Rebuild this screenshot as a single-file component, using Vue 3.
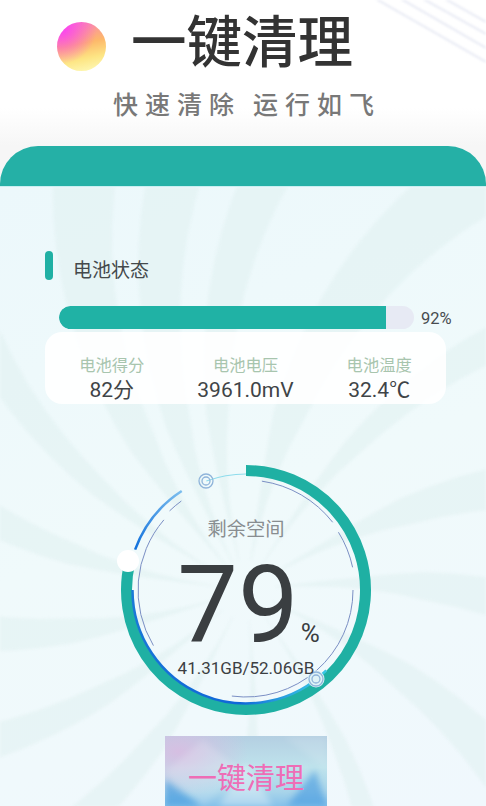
<script setup>
const CX = 125
const CY = 125

function polar(r, deg, cx = CX, cy = CY) {
  const a = (deg * Math.PI) / 180
  return [cx + r * Math.sin(a), cy - r * Math.cos(a)]
}
function arc(r, from, to) {
  const [x1, y1] = polar(r, from)
  const [x2, y2] = polar(r, to)
  const large = to - from > 180 ? 1 : 0
  return `M${x1.toFixed(2)} ${y1.toFixed(2)}A${r} ${r} 0 ${large} 1 ${x2.toFixed(2)} ${y2.toFixed(2)}`
}

const thinArcs = [
  arc(110, 8.3, 52),
  arc(109, 58, 78),
  arc(107, 90, 187.6),
  arc(108, 239, 310.5),
  arc(110, 316, 324)
]

const ring = arc(119.5, 0, 284)
const innerBlue = arc(113.5, 135, 270)
const outerBlue = arc(118, 290, 327)
const cyanArc = arc(116, 340, 360)

// Sunburst blades, angle measured at r = 400 from the ring's centre.
const blades = [
  [336, 4.5], [349, 4], [2, 3.5], [25, 5], [48, 3], [75, 4.5], [100, 4.5], [130, 4.5],
  [160, 2.5], [190, 2.5], [222, 3.5], [245, 3.5], [268, 4], [293, 3.5], [316, 3]
]
const sunCx = 246
const sunCy = 403
function twist(r) {
  return 16 * (Math.pow(r / 400, 1.5) - 1)
}
const bladePaths = blades.map(([angle, w]) => {
  const left = []
  const right = []
  for (let r = 30; r <= 720; r += 30) {
    const tw = twist(r)
    const spread = Math.min(1, r / 180)
    left.push(polar(r, angle - w * spread + tw, sunCx, sunCy))
    right.unshift(polar(r, angle + w * spread + tw, sunCx, sunCy))
  }
  return 'M' + [...left, ...right].map((p) => p[0].toFixed(1) + ' ' + p[1].toFixed(1)).join('L') + 'Z'
})

const stats = [
  { label: '电池得分', value: '82分' },
  { label: '电池电压', value: '3961.0mV' },
  { label: '电池温度', value: '32.4℃' }
]
const stripes = [
  'M376 -1L486 62',
  'M396 -4L486 48',
  'M418 -4L486 34',
  'M440 -4L486 22'
]
const facets = [
  { points: '0,36 38,4 78,36 38,70', fill: '#ffffff', o: 0.16 },
  { points: '54,70 81,28 108,70', fill: '#ffffff', o: 0.32 },
  { points: '118,0 162,0 162,34', fill: '#ffffff', o: 0.12 },
  { points: '122,70 150,34 162,70', fill: '#3a94de', o: 0.55 },
  { points: '0,70 0,44 36,70', fill: '#3a94de', o: 0.6 }
]
</script>

<template>
  <div class="page">
    <header class="head">
      <svg class="stripes" width="486" height="70" viewBox="0 0 486 70">
        <path v-for="(d, i) in stripes" :key="i" :d="d" class="stripe" />
      </svg>
      <div class="brand">
        <span class="logo"></span>
        <h1 class="title">一键清理</h1>
      </div>
      <p class="slogan"><span>快速清除</span><span>运行如飞</span></p>
    </header>

    <div class="band"></div>

    <main class="body">
      <svg class="sun" width="486" height="620" viewBox="0 0 486 620">
        <path v-for="(d, i) in bladePaths" :key="i" :d="d" class="blade" />
      </svg>

      <section class="battery">
        <div class="sec-title">
          <span class="mark"></span>
          <span class="sec-text">电池状态</span>
        </div>
        <div class="progress">
          <div class="track"><div class="fill" :style="{ width: '92%' }"></div></div>
          <span class="pct">92%</span>
        </div>
        <div class="card">
          <div v-for="s in stats" :key="s.label" class="stat">
            <span class="stat-label">{{ s.label }}</span>
            <span class="stat-value">{{ s.value }}</span>
          </div>
        </div>
      </section>

      <section class="gauge">
        <svg class="gauge-art" width="250" height="250" viewBox="0 0 250 250">
          <defs>
            <linearGradient id="ib" gradientUnits="userSpaceOnUse" x1="10" y1="120" x2="200" y2="230">
              <stop offset="0" stop-color="#1a7ad8" />
              <stop offset="0.7" stop-color="#0f66d8" />
              <stop offset="1" stop-color="#3fd4e6" />
            </linearGradient>
            <linearGradient id="ob" gradientUnits="userSpaceOnUse" x1="14" y1="86" x2="62" y2="24">
              <stop offset="0" stop-color="#0f6fdc" />
              <stop offset="1" stop-color="#7fc0ee" />
            </linearGradient>
          </defs>
          <path :d="ring" class="ring" />
          <path :d="innerBlue" class="inner-blue" />
          <path :d="outerBlue" class="outer-blue" />
          <path :d="cyanArc" class="cyan" />
          <path v-for="(d, i) in thinArcs" :key="i" :d="d" class="thin" />
          <circle cx="85" cy="16" r="7" class="dot" />
          <circle cx="85" cy="16" r="4" class="dot" />
          <circle cx="195" cy="214" r="8.5" class="halo" />
          <circle cx="195" cy="214" r="7" class="dot" />
          <circle cx="195" cy="214" r="4" class="dot" />
          <circle cx="7" cy="96" r="11" class="blob" />
        </svg>
        <div class="gauge-text">
          <span class="free">剩余空间</span>
          <div class="num-row">
            <span class="num">79</span>
            <span class="unit">%</span>
          </div>
          <span class="size">41.31GB/52.06GB</span>
        </div>
      </section>

      <button class="clean" type="button">
        <svg class="facets" width="162" height="70" viewBox="0 0 162 70">
          <polygon v-for="(f, i) in facets" :key="i" :points="f.points" :fill="f.fill" :opacity="f.o" />
        </svg>
        <span class="clean-text">一键清理</span>
      </button>
    </main>
  </div>
</template>

<style>
html, body { margin: 0; background: #fff; }
</style>

<style scoped>
.page {
  width: 486px;
  height: 806px;
  overflow: hidden;
  display: flex;
  flex-direction: column;
  font-family: Roboto, "Noto Sans CJK SC", sans-serif;
  background: #f6f6f6;
}
.head {
  position: relative;
  height: 146px;
  flex: none;
  box-sizing: border-box;
  padding: 14px 0 0 57px;
  background: linear-gradient(180deg, #fff 0, #fff 108px, #f6f6f6 146px);
}
.stripes { position: absolute; left: 0; top: 0; filter: blur(0.8px); }
.stripe { fill: none; stroke: #eceef6; stroke-width: 2.5; }
.brand { display: flex; align-items: center; gap: 25px; position: relative; }
.logo {
  width: 49px;
  height: 49px;
  margin-top: 5px;
  border-radius: 50%;
  background:
    radial-gradient(circle at 8% 12%, #fb3ff5 0, rgba(251, 63, 245, 0) 58%),
    linear-gradient(168deg, #f98ab0 8%, #fdb86a 45%, #fde584 72%, #fef9b6 96%);
  filter: blur(0.5px);
}
.title {
  margin: 0;
  font-size: 55.5px;
  line-height: 60px;
  font-weight: 500;
  color: #333;
  white-space: nowrap;
}
.slogan {
  position: relative;
  display: flex;
  gap: 12px;
  margin: 15px 0 0 56px;
  font-size: 25px;
  line-height: 34px;
  letter-spacing: 7px;
  font-weight: 500;
  color: #787878;
}
.band {
  flex: none;
  height: 40px;
  border-radius: 38px 38px 0 0;
  background: #25b0a6;
}
.body {
  position: relative;
  flex: 1;
  min-height: 0;
  border-top: 1px solid #c9eff1;
  box-sizing: border-box;
  background: linear-gradient(160deg, #ecf8fb 0, #f0fafb 50%, #f0f8fd 100%);
  overflow: hidden;
}
.sun { position: absolute; left: 0; top: 0; filter: blur(1.6px); }
.blade { fill: #e0f0f1; opacity: 0.55; }
.battery { position: relative; padding: 64px 0 0 45px; }
.sec-title { display: flex; align-items: center; gap: 20px; height: 29px; }
.mark { width: 8px; height: 29px; border-radius: 4px; background: #20b0a4; }
.sec-text { font-size: 19px; color: #44494b; padding-top: 6px; }
.progress { display: flex; align-items: center; gap: 7px; margin: 26px 0 0 14px; }
.track { width: 355px; height: 23px; border-radius: 12px; background: #e7eaf4; overflow: hidden; }
.fill { height: 100%; background: #20b2a5; border-radius: 12px 0 0 12px; }
.pct { font-size: 16.5px; color: #474c50; position: relative; top: 1px; }
.card {
  display: grid;
  grid-template-columns: repeat(3, 1fr);
  width: 401px;
  height: 72px;
  margin-top: 3px;
  box-sizing: border-box;
  padding-top: 23px;
  border-radius: 17px;
  background: rgba(255, 255, 255, 0.9);
}
.stat { display: flex; flex-direction: column; align-items: center; }
.stat-label { font-size: 16.3px; line-height: 22px; color: #a8c5ae; }
.stat-value { font-size: 21px; line-height: 26px; color: #3f4447; }
.gauge {
  position: relative;
  width: 250px;
  height: 250px;
  margin: 61px 0 0 121px;
}
.gauge-art { position: absolute; left: 0; top: 0; overflow: visible; }
.ring { fill: none; stroke: #1fb0a3; stroke-width: 11; }
.inner-blue { fill: none; stroke: url(#ib); stroke-width: 2.5; }
.outer-blue { fill: none; stroke: url(#ob); stroke-width: 2.5; }
.cyan { fill: none; stroke: #8fdcec; stroke-width: 1.2; }
.thin { fill: none; stroke: #7b8fc4; stroke-width: 1; }
.dot { fill: none; stroke: #8fb4da; stroke-width: 1.3; }
.halo { fill: #dff3f6; }
.blob { fill: #fff; }
.gauge-text {
  position: relative;
  display: flex;
  flex-direction: column;
  align-items: center;
  padding-top: 51px;
}
.free { font-size: 19.3px; line-height: 28px; color: #888d90; }
.num-row { position: relative; height: 100px; margin: 11px 16px 0 0; }
.num { font-size: 108px; line-height: 100px; color: #3a3e41; display: block; }
.unit {
  position: absolute;
  left: 100%;
  bottom: 9px;
  margin-left: 2px;
  font-size: 26px;
  line-height: 26px;
  color: #3a3e41;
}
.size { font-size: 17px; line-height: 22px; color: #3c4043; margin-top: 2px; }
.clean {
  position: relative;
  display: block;
  width: 162px;
  height: 70px;
  margin: 21px 0 0 165px;
  padding: 0;
  border: 0;
  overflow: hidden;
  font-family: inherit;
  background:
    radial-gradient(ellipse 70px 46px at 8% 22%, #d6bfe2 0, rgba(214, 191, 226, 0) 100%),
    linear-gradient(180deg, #b4cfe2 0, #bfe3ec 45%, #a8d4ea 80%, #86c2ea 100%);
}
.facets { position: absolute; left: 0; top: 0; filter: blur(3px); }
.clean-text {
  position: relative;
  display: block;
  padding-top: 15px;
  font-size: 29px;
  line-height: 40px;
  color: #ee6db6;
}
</style>
